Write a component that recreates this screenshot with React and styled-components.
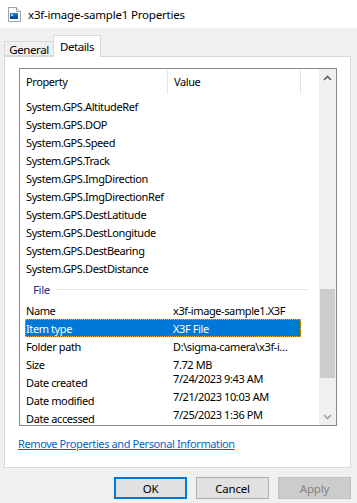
import React from "react";
import styled, { createGlobalStyle } from "styled-components";

const GlobalStyle = createGlobalStyle`
  html, body {
    margin: 0;
    padding: 0;
    background: #f0f0f0;
  }
  body {
    font-family: "Noto Sans", "Liberation Sans", sans-serif;
    font-size: 11px;
    letter-spacing: -0.4px;
    color: #000;
  }
`;

const Window = styled.div`
  width: 357px;
  height: 503px;
  display: flex;
  flex-direction: column;
  background: #f0f0f0;
  overflow: hidden;
`;

const TitleBar = styled.div`
  height: 28px;
  background: #fff;
  display: flex;
  align-items: center;
  padding-left: 8px;
  gap: 7px;
  font-size: 11.5px;
  letter-spacing: -0.2px;
`;

const TabStrip = styled.div`
  display: flex;
  align-items: flex-end;
  height: 21px;
  margin-top: 7px;
  padding-left: 4px;
  position: relative;
  z-index: 1;
`;

const Tab = styled.div`
  box-sizing: border-box;
  border: 1px solid #d9d9d9;
  border-bottom: ${(p) => (p.$active ? "none" : "1px solid #d9d9d9")};
  background: ${(p) => (p.$active ? "#fff" : "#f0f0f0")};
  height: ${(p) => (p.$active ? "22px" : "15px")};
  margin-bottom: ${(p) => (p.$active ? "-1px" : "0")};
  margin-left: ${(p) => (p.$active ? "-1px" : "0")};
  width: ${(p) => p.$w}px;
  display: flex;
  align-items: center;
  justify-content: center;
  padding-top: ${(p) => (p.$active ? "0" : "1px")};
  font-size: 11.5px;
`;

const Panel = styled.div`
  box-sizing: border-box;
  margin: 0 6px 0 4px;
  height: 412px;
  background: #fff;
  border: 1px solid #d9d9d9;
  padding: 11px 0 0 14px;
  display: flex;
  flex-direction: column;
`;

const ListView = styled.div`
  box-sizing: border-box;
  width: 318px;
  height: 358px;
  border: 1px solid #828790;
  display: grid;
  grid-template-columns: 1fr 17px;
  overflow: hidden;
`;

const ListBody = styled.div`
  overflow: hidden;
  display: flex;
  flex-direction: column;
`;

const Header = styled.div`
  height: 28px;
  flex-shrink: 0;
  display: grid;
  grid-template-columns: 148px 133px 1fr;
  align-items: stretch;
`;

const HeaderCell = styled.div`
  display: flex;
  align-items: center;
  padding-left: 6px;
  padding-bottom: 2px;
  border-right: ${(p) => (p.$sep ? "1px solid #e5e5e5" : "none")};
  margin: 1px 0 3px;
`;

const Row = styled.div`
  box-sizing: border-box;
  flex-shrink: 0;
  height: 18px;
  margin-left: 5px;
  width: 276px;
  display: grid;
  grid-template-columns: 142px 134px;
  align-items: center;
  background: ${(p) => (p.$selected ? "#0078d7" : "transparent")};
  color: ${(p) => (p.$selected ? "#fff" : "#000")};
  outline: ${(p) => (p.$selected ? "1px dotted #f7a03c" : "none")};
  outline-offset: -1px;
  white-space: nowrap;
`;

const NameCell = styled.span`
  padding-left: 1px;
  overflow: hidden;
`;

const ValueCell = styled.span`
  padding-left: 6px;
  overflow: hidden;
  transform: translateY(${(p) => (p.$raised ? "-4px" : "0")});
`;

const Group = styled.div`
  flex-shrink: 0;
  height: 24px;
  display: flex;
  align-items: center;
  gap: 7px;
  padding-left: 13px;
  width: 275px;
  color: #1e3287;
  font-size: 11.5px;
`;

const GroupLine = styled.div`
  flex: 1;
  height: 1px;
  background: #e2e2e2;
`;

const ScrollBar = styled.div`
  background: #f0f0f0;
  display: flex;
  flex-direction: column;
`;

const ScrollButton = styled.div`
  height: 17px;
  flex-shrink: 0;
  display: flex;
  align-items: center;
  justify-content: center;
`;

const Track = styled.div`
  flex: 1;
  padding-top: 203px;
  display: flex;
  flex-direction: column;
`;

const Thumb = styled.div`
  height: 89px;
  margin: 0 1px;
  background: #cdcdcd;
`;

const Link = styled.a`
  margin-top: 10px;
  margin-left: -1px;
  color: #0066cc;
  text-decoration: underline;
  cursor: pointer;
`;

const ButtonRow = styled.div`
  display: flex;
  justify-content: flex-end;
  gap: 9px;
  padding-right: 6px;
  margin-top: 9px;
`;

const Button = styled.button`
  box-sizing: border-box;
  width: 73px;
  height: 22px;
  font: inherit;
  font-size: 11.5px;
  letter-spacing: -0.2px;
  padding: 0;
  background: ${(p) => (p.disabled ? "#cccccc" : "#e1e1e1")};
  color: ${(p) => (p.disabled ? "#838383" : "#000")};
  border: ${(p) =>
    p.$default ? "2px solid #0078d7" : p.disabled ? "1px solid #bfbfbf" : "1px solid #adadad"};
`;

const FileIcon = () => (
  <svg width="13" height="15" viewBox="0 0 13 15">
    <path d="M0.5 0.5h8l4 4v10h-12z" fill="#fff" stroke="#9aa3ad" />
    <path d="M8.5 0.5v4h4" fill="#eef1f4" stroke="#9aa3ad" />
    <defs>
      <linearGradient id="img" x1="0" y1="0" x2="0" y2="1">
        <stop offset="0" stopColor="#1d7fd6" />
        <stop offset="1" stopColor="#0b3f86" />
      </linearGradient>
    </defs>
    <rect x="2" y="6" width="8" height="6" fill="url(#img)" />
    <rect x="3" y="7" width="2" height="2" fill="#9fd0ff" />
  </svg>
);

const Chevron = ({ up, color }) => (
  <svg width="9" height="6" viewBox="0 0 9 6">
    <polyline
      points={up ? "1,5 4.5,1.5 8,5" : "1,1 4.5,4.5 8,1"}
      fill="none"
      stroke={color}
      strokeWidth="1.6"
    />
  </svg>
);

const gps = [
  "AltitudeRef",
  "DOP",
  "Speed",
  "Track",
  "ImgDirection",
  "ImgDirectionRef",
  "DestLatitude",
  "DestLongitude",
  "DestBearing",
  "DestDistance",
];

const fileProps = [
  { name: "Name", value: "x3f-image-sample1.X3F" },
  { name: "Item type", value: "X3F File", selected: true },
  { name: "Folder path", value: "D:\\sigma-camera\\x3f-i…" },
  { name: "Size", value: "7.72 MB" },
  { name: "Date created", value: "7/24/2023 9:43 AM", raised: true },
  { name: "Date modified", value: "7/21/2023 10:03 AM", raised: true },
  { name: "Date accessed", value: "7/25/2023 1:36 PM", raised: true },
];

export default function App() {
  return (
    <Window>
      <GlobalStyle />
      <TitleBar>
        <FileIcon />
        <span>x3f-image-sample1 Properties</span>
      </TitleBar>
      <TabStrip>
        <Tab $w={50}>General</Tab>
        <Tab $w={48} $active>
          Details
        </Tab>
      </TabStrip>
      <Panel>
        <ListView>
          <ListBody>
            <Header>
              <HeaderCell $sep>Property</HeaderCell>
              <HeaderCell $sep>Value</HeaderCell>
              <HeaderCell />
            </Header>
            {gps.map((g) => (
              <Row key={g}>
                <NameCell>System.GPS.{g}</NameCell>
                <ValueCell />
              </Row>
            ))}
            <Group>
              File
              <GroupLine />
            </Group>
            {fileProps.map((f) => (
              <Row key={f.name} $selected={f.selected}>
                <NameCell>{f.name}</NameCell>
                <ValueCell $raised={f.raised}>{f.value}</ValueCell>
              </Row>
            ))}
          </ListBody>
          <ScrollBar>
            <ScrollButton>
              <Chevron up color="#606060" />
            </ScrollButton>
            <Track>
              <Thumb />
            </Track>
            <ScrollButton>
              <Chevron color="#a3a3a3" />
            </ScrollButton>
          </ScrollBar>
        </ListView>
        <Link>Remove Properties and Personal Information</Link>
      </Panel>
      <ButtonRow>
        <Button $default>OK</Button>
        <Button>Cancel</Button>
        <Button disabled>Apply</Button>
      </ButtonRow>
    </Window>
  );
}
